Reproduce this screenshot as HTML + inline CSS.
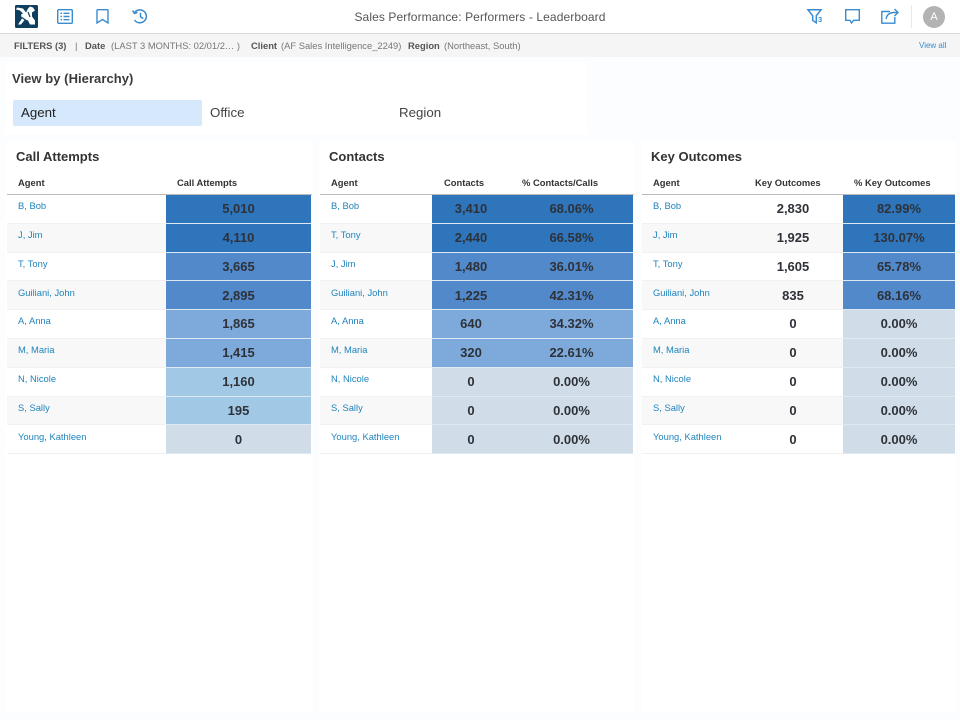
<!DOCTYPE html>
<html><head><meta charset="utf-8">
<style>
html,body{margin:0;padding:0}
body{width:960px;height:720px;position:relative;overflow:hidden;background:#fbfdfe;font-family:"Liberation Sans",sans-serif;color:#333}
.a{position:absolute;white-space:nowrap}
.panel{position:absolute;background:#fff}
.title{position:absolute;font-size:13px;font-weight:bold;color:#333;top:149px;line-height:15px;white-space:nowrap}
.hd{position:absolute;top:177px;font-size:9.4px;font-weight:bold;color:#333;line-height:11px;white-space:nowrap}
.line{position:absolute;top:194px;height:1px;background:#bbb}
.f{position:absolute;top:40px;font-size:9.4px;line-height:11px;color:#777;white-space:nowrap}
.f b{color:#555}
.r{position:absolute;left:0;width:960px;--t:6px}
.r1{top:195px;height:29px}.r2{top:224px;height:29px}.r3{top:253px;height:28px}
.r4{top:281px;height:29px;--t:7px}.r5{top:310px;height:29px}.r6{top:339px;height:29px}
.r7{top:368px;height:29px}.r8{top:397px;height:28px}.r9{top:425px;height:29px;--t:7px}
.bg,.c{position:absolute;top:0;bottom:0;box-sizing:border-box}
.bg{border-bottom:1px solid #f1f1f1;background:#fff}
.e .bg{background:#f8f8f8}
.c{border-bottom:1px solid #dfe9f3}
.p1{left:7px;width:159px}.p2{left:320px;width:112px}.p3{left:642px;width:201px}
.c1{left:166px;width:145px}.c2{left:432px;width:201px}.c3{left:843px;width:112px}
.d{background:#2e75bc}.m{background:#5189cb}.l{background:#7eaadb}.s{background:#a1c9e6}.z{background:#d0dde8}
.nm{position:absolute;top:calc(var(--t) - 1px);font-size:9.4px;color:#1f83bd;line-height:11px;white-space:nowrap}
.n1{left:18px}.n2{left:331px}.n3{left:653px}
.v{position:absolute;top:calc(var(--t) + 1px);font-size:13px;font-weight:bold;color:#2e3238;line-height:14px;text-align:center;white-space:nowrap}
.v1{left:166px;width:145px}.v2{left:432px;width:78px}.v3{left:510px;width:123px}.v4{left:743px;width:100px}.v5{left:843px;width:112px}
svg{position:absolute;overflow:visible}
</style></head><body>

<div class="a" style="left:0;top:0;width:960px;height:33px;background:#fff"></div>
<div class="a" style="left:0;top:33px;width:960px;height:1px;background:#dcdcdc"></div>
<div class="a" style="left:0;top:34px;width:960px;height:23px;background:#f5f5f5"></div>

<svg style="left:15px;top:5px" width="23" height="23" viewBox="0 0 23 23">
<rect width="23" height="23" rx="1.5" fill="#0f3f5e"/>
<path d="M2 2.500l6 1 3 4 2-4 2-2 3 1 2 3-3 2 0 4 3 4v4h-5l-2-4-3-1-4 5H3l4-6-1-4 2-1-3-3-4-1z" fill="#fff"/>
<path d="M7 12.500l4 3-3 3.500M13 7l2 5" stroke="#0f3f5e" stroke-width="1.200" fill="none"/>
</svg>
<svg style="left:57px;top:9px" width="16" height="15" viewBox="0 0 16 15" fill="none" stroke="#3a8cd0" stroke-width="1.400">
<rect x=".7" y=".7" width="14.600" height="13.600" rx="1"/>
<path d="M3.500 4.300h1.500M6.500 4.300h6M3.500 7.500h1.500M6.500 7.500h6M3.500 10.700h1.500M6.500 10.700h6"/>
</svg>
<svg style="left:96px;top:9px" width="13" height="15" viewBox="0 0 13 15" fill="none" stroke="#3a8cd0" stroke-width="1.400">
<path d="M1 1.500Q1 .7 1.800 .7h9.400q.8 0 .8.8V14L6.500 10.500 1 14z"/>
</svg>
<svg style="left:132px;top:9px" width="16" height="15" viewBox="0 0 16 15" fill="none" stroke="#3a8cd0" stroke-width="1.500">
<path d="M2.600 3.500A6.500 6.500 0 1 1 2.500 11"/>
<path d="M.5 1.500l2 3 3-1.200"/>
<path d="M8.500 3.800v4l2.800 1.800"/>
</svg>

<div class="a" style="left:0;width:960px;top:10px;text-align:center;font-size:12px;line-height:14px;color:#555;letter-spacing:.1px">Sales Performance: Performers - Leaderboard</div>

<svg style="left:807px;top:9px" width="18" height="15" viewBox="0 0 18 15" fill="none" stroke="#3a8cd0" stroke-width="1.500">
<path d="M1 .8h13L9.300 6.800v7L5.700 11.500V6.800z"/>
</svg>
<div class="a" style="left:818px;top:16px;font-size:7.500px;font-weight:bold;line-height:8px;color:#3a8cd0">3</div>
<svg style="left:845px;top:9px" width="15" height="15" viewBox="0 0 15 15" fill="none" stroke="#3a8cd0" stroke-width="1.400">
<path d="M.7 .7h13.600v10.600H8.500L6.500 14 5 11.300H.7z"/>
</svg>
<svg style="left:881px;top:8px" width="18" height="16" viewBox="0 0 18 16" fill="none" stroke="#3a8cd0" stroke-width="1.400">
<path d="M9 3.500H.8v11.700h13V9"/>
<path d="M5 11q1-6 7.500-6.500h4M13.500 1l3.500 3.500-3.500 3.500"/>
</svg>
<div class="a" style="left:911px;top:5px;width:1px;height:23px;background:#e8e8e8"></div>
<div class="a" style="left:923px;top:6px;width:22px;height:22px;border-radius:50%;background:#b3b3b3;color:#fff;font-size:11px;line-height:23px;text-align:center">A</div>

<div class="f" style="left:14px"><b>FILTERS (3)</b></div>
<div class="f" style="left:75px">|</div>
<div class="f" style="left:85px"><b>Date</b></div>
<div class="f" style="left:111px">(LAST 3 MONTHS: 02/01/2… )</div>
<div class="f" style="left:251px"><b>Client</b></div>
<div class="f" style="left:281px">(AF Sales Intelligence_2249)</div>
<div class="f" style="left:408px"><b>Region</b></div>
<div class="f" style="left:444px">(Northeast, South)</div>
<div class="a" style="left:919px;top:41px;font-size:8px;line-height:10px;color:#3a8cd0">View all</div>

<div class="panel" style="left:5px;top:62px;width:582px;height:72px"></div>
<div class="a" style="left:12px;top:71px;font-size:13px;font-weight:bold;line-height:16px;color:#3a3a3a;letter-spacing:.05px">View by (Hierarchy)</div>
<div class="a" style="left:13px;top:100px;width:189px;height:26px;background:#d6e8fb;border-radius:2px"></div>
<div class="a" style="left:21px;top:105px;font-size:13.300px;line-height:16px;color:#222">Agent</div>
<div class="a" style="left:210px;top:105px;font-size:13.300px;line-height:16px;color:#444">Office</div>
<div class="a" style="left:399px;top:105px;font-size:13.300px;line-height:16px;color:#444">Region</div>

<div class="panel" style="left:5px;top:141px;width:308px;height:571px"></div>
<div class="panel" style="left:320px;top:141px;width:315px;height:571px"></div>
<div class="panel" style="left:642px;top:141px;width:314px;height:571px"></div>

<div class="title" style="left:16px">Call Attempts</div>
<div class="title" style="left:329px">Contacts</div>
<div class="title" style="left:651px">Key Outcomes</div>

<div class="hd" style="left:18px">Agent</div><div class="hd" style="left:177px">Call Attempts</div>
<div class="hd" style="left:331px">Agent</div><div class="hd" style="left:444px">Contacts</div><div class="hd" style="left:522px">% Contacts/Calls</div>
<div class="hd" style="left:653px">Agent</div><div class="hd" style="left:755px">Key Outcomes</div><div class="hd" style="left:854px">% Key Outcomes</div>

<div class="line" style="left:7px;width:305px"></div>
<div class="line" style="left:320px;width:314px"></div>
<div class="line" style="left:642px;width:313px"></div>

<div class="r r1"><div class="bg p1"></div><div class="c c1 d"></div><div class="nm n1">B, Bob</div><div class="v v1">5,010</div>
<div class="bg p2"></div><div class="c c2 d"></div><div class="nm n2">B, Bob</div><div class="v v2">3,410</div><div class="v v3">68.06%</div>
<div class="bg p3"></div><div class="c c3 d"></div><div class="nm n3">B, Bob</div><div class="v v4">2,830</div><div class="v v5">82.99%</div></div>

<div class="r r2 e"><div class="bg p1"></div><div class="c c1 d"></div><div class="nm n1">J, Jim</div><div class="v v1">4,110</div>
<div class="bg p2"></div><div class="c c2 d"></div><div class="nm n2">T, Tony</div><div class="v v2">2,440</div><div class="v v3">66.58%</div>
<div class="bg p3"></div><div class="c c3 d"></div><div class="nm n3">J, Jim</div><div class="v v4">1,925</div><div class="v v5">130.07%</div></div>

<div class="r r3"><div class="bg p1"></div><div class="c c1 m"></div><div class="nm n1">T, Tony</div><div class="v v1">3,665</div>
<div class="bg p2"></div><div class="c c2 m"></div><div class="nm n2">J, Jim</div><div class="v v2">1,480</div><div class="v v3">36.01%</div>
<div class="bg p3"></div><div class="c c3 m"></div><div class="nm n3">T, Tony</div><div class="v v4">1,605</div><div class="v v5">65.78%</div></div>

<div class="r r4 e"><div class="bg p1"></div><div class="c c1 m"></div><div class="nm n1">Guiliani, John</div><div class="v v1">2,895</div>
<div class="bg p2"></div><div class="c c2 m"></div><div class="nm n2">Guiliani, John</div><div class="v v2">1,225</div><div class="v v3">42.31%</div>
<div class="bg p3"></div><div class="c c3 m"></div><div class="nm n3">Guiliani, John</div><div class="v v4">835</div><div class="v v5">68.16%</div></div>

<div class="r r5"><div class="bg p1"></div><div class="c c1 l"></div><div class="nm n1">A, Anna</div><div class="v v1">1,865</div>
<div class="bg p2"></div><div class="c c2 l"></div><div class="nm n2">A, Anna</div><div class="v v2">640</div><div class="v v3">34.32%</div>
<div class="bg p3"></div><div class="c c3 z"></div><div class="nm n3">A, Anna</div><div class="v v4">0</div><div class="v v5">0.00%</div></div>

<div class="r r6 e"><div class="bg p1"></div><div class="c c1 l"></div><div class="nm n1">M, Maria</div><div class="v v1">1,415</div>
<div class="bg p2"></div><div class="c c2 l"></div><div class="nm n2">M, Maria</div><div class="v v2">320</div><div class="v v3">22.61%</div>
<div class="bg p3"></div><div class="c c3 z"></div><div class="nm n3">M, Maria</div><div class="v v4">0</div><div class="v v5">0.00%</div></div>

<div class="r r7"><div class="bg p1"></div><div class="c c1 s"></div><div class="nm n1">N, Nicole</div><div class="v v1">1,160</div>
<div class="bg p2"></div><div class="c c2 z"></div><div class="nm n2">N, Nicole</div><div class="v v2">0</div><div class="v v3">0.00%</div>
<div class="bg p3"></div><div class="c c3 z"></div><div class="nm n3">N, Nicole</div><div class="v v4">0</div><div class="v v5">0.00%</div></div>

<div class="r r8 e"><div class="bg p1"></div><div class="c c1 s"></div><div class="nm n1">S, Sally</div><div class="v v1">195</div>
<div class="bg p2"></div><div class="c c2 z"></div><div class="nm n2">S, Sally</div><div class="v v2">0</div><div class="v v3">0.00%</div>
<div class="bg p3"></div><div class="c c3 z"></div><div class="nm n3">S, Sally</div><div class="v v4">0</div><div class="v v5">0.00%</div></div>

<div class="r r9"><div class="bg p1"></div><div class="c c1 z"></div><div class="nm n1">Young, Kathleen</div><div class="v v1">0</div>
<div class="bg p2"></div><div class="c c2 z"></div><div class="nm n2">Young, Kathleen</div><div class="v v2">0</div><div class="v v3">0.00%</div>
<div class="bg p3"></div><div class="c c3 z"></div><div class="nm n3">Young, Kathleen</div><div class="v v4">0</div><div class="v v5">0.00%</div></div>

</body></html>
